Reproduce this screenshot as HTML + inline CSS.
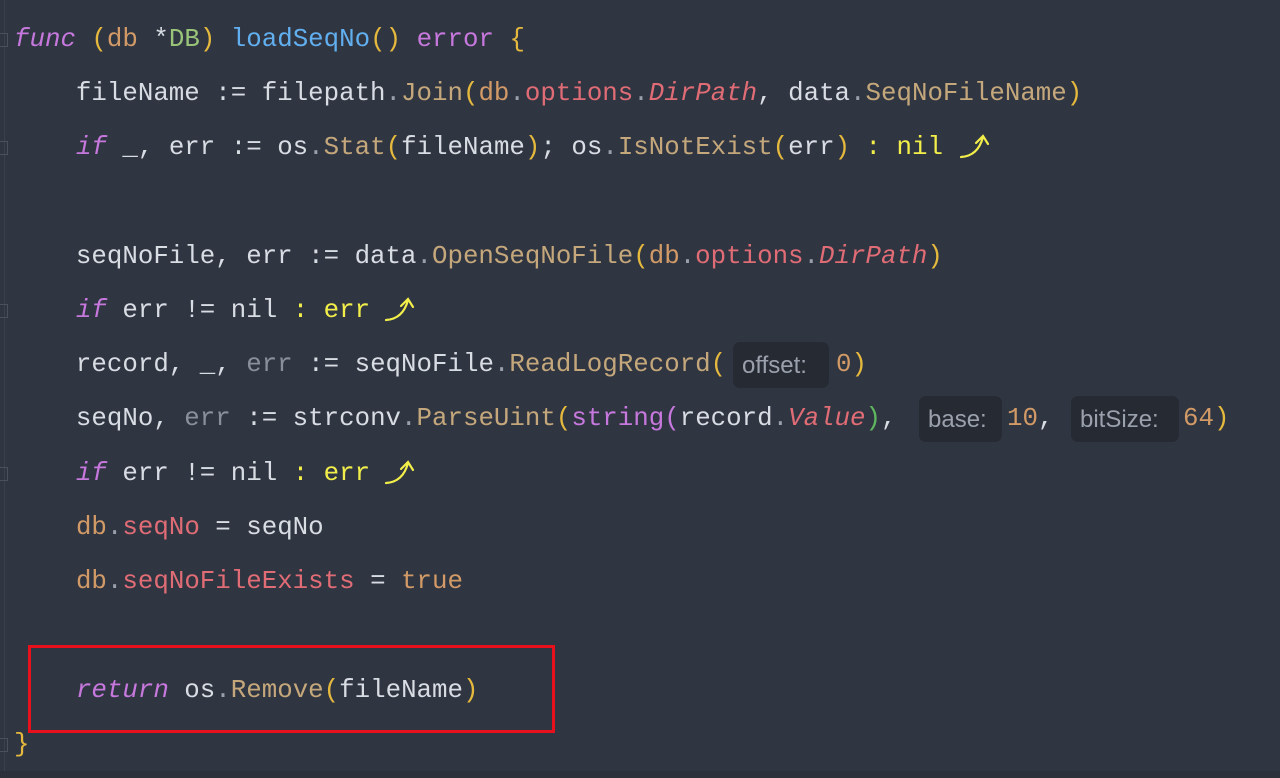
<!DOCTYPE html>
<html><head><meta charset="utf-8"><style>
html,body{margin:0;padding:0;}
body{width:1280px;height:778px;background:#303542;position:relative;overflow:hidden;font-family:"Liberation Mono","DejaVu Sans Mono",monospace;font-size:25.8px;color:#d8dce3;}
.l{position:absolute;left:14px;white-space:pre;line-height:54px;height:54px;}
.k{color:#c678dd;font-style:italic}
.kw{color:#c678dd}
.f{color:#61afef}
.p{color:#d19a66}
.t{color:#98c379}
.b{color:#e5b93d}
.m{color:#c4a77b}
.r{color:#e06c75}
.ri{color:#e06c75;font-style:italic}
.g{color:#8a909b}
.y{color:#f2ee4a}
.pu{color:#c678dd}
.gr{color:#5fb85f}
.d{color:#9aa0aa}
.h{position:absolute;background:#262a33;border-radius:7px;color:#9aa1ad;font-family:"Liberation Sans",sans-serif;font-size:24px;height:46px;line-height:48px;padding:0 9px;box-sizing:border-box;}
.box{position:absolute;left:28px;top:645px;width:527px;height:88px;border:3px solid #e8101c;box-sizing:border-box;}
.fold{position:absolute;left:0;width:8px;height:14px;border:1px solid #4a505c;border-left:none;box-sizing:border-box;}
.bot{position:absolute;left:0;top:771px;width:1280px;height:7px;background:#2b303b;}
</style></head><body>
<div style="position:absolute;left:4px;top:0;width:1px;height:771px;background:#3a404c"></div>
<div class="fold" style="top:33px"></div>
<div class="fold" style="top:141px"></div>
<div class="fold" style="top:304px"></div>
<div class="fold" style="top:467px"></div>
<div class="fold" style="top:738px"></div>

<div class="l" style="top:13px"><span class="k">func</span> <span class="b">(</span><span class="p">db</span> *<span class="t">DB</span><span class="b">)</span> <span class="f">loadSeqNo</span><span class="b">()</span> <span class="kw">error</span> <span class="b">{</span></div>
<div class="l" style="top:67px">    fileName := filepath<span class="d">.</span><span class="m">Join</span><span class="b">(</span><span class="p">db</span><span class="d">.</span><span class="r">options</span><span class="d">.</span><span class="ri">DirPath</span>, data<span class="d">.</span><span class="m">SeqNoFileName</span><span class="b">)</span></div>
<div class="l" style="top:121px">    <span class="k">if</span> _, err := os<span class="d">.</span><span class="m">Stat</span><span class="b">(</span>fileName<span class="b">)</span>; os<span class="d">.</span><span class="m">IsNotExist</span><span class="b">(</span>err<span class="b">)</span> <span class="y">: nil</span></div>
<div class="l" style="top:230px">    seqNoFile, err := data<span class="d">.</span><span class="m">OpenSeqNoFile</span><span class="b">(</span><span class="p">db</span><span class="d">.</span><span class="r">options</span><span class="d">.</span><span class="ri">DirPath</span><span class="b">)</span></div>
<div class="l" style="top:284px">    <span class="k">if</span> err != nil <span class="y">: err</span></div>
<div class="l" style="top:338px">    record, _, <span class="g">err</span> := seqNoFile<span class="d">.</span><span class="m">ReadLogRecord</span><span class="b">(</span></div>
<div class="h" style="left:733px;top:342px;width:96px">offset:</div>
<div class="l" style="top:338px;left:836px"><span class="p">0</span><span class="b">)</span></div>
<div class="l" style="top:392px">    seqNo, <span class="g">err</span> := strconv<span class="d">.</span><span class="m">ParseUint</span><span class="b">(</span><span class="pu">string</span><span class="pu">(</span>record<span class="d">.</span><span class="ri">Value</span><span class="gr">)</span>, </div>
<div class="h" style="left:919px;top:396px;width:83px">base:</div>
<div class="l" style="top:392px;left:1007px"><span class="p">10</span>, </div>
<div class="h" style="left:1071px;top:396px;width:108px">bitSize:</div>
<div class="l" style="top:392px;left:1183px"><span class="p">64</span><span class="b">)</span></div>
<div class="l" style="top:447px">    <span class="k">if</span> err != nil <span class="y">: err</span></div>
<div class="l" style="top:501px">    <span class="p">db</span><span class="d">.</span><span class="r">seqNo</span> = seqNo</div>
<div class="l" style="top:555px">    <span class="p">db</span><span class="d">.</span><span class="r">seqNoFileExists</span> = <span class="p">true</span></div>
<div class="l" style="top:664px">    <span class="k">return</span> os<span class="d">.</span><span class="m">Remove</span><span class="b">(</span>fileName<span class="b">)</span></div>
<div class="l" style="top:718px"><span class="b">}</span></div>

<svg style="position:absolute;left:958px;top:132px" width="34" height="30" viewBox="0 0 34 30"><path d="M3 25 Q20 24 25 5 M18 11 L25 4 L30 12" fill="none" stroke="#f2ee4a" stroke-width="2.2" stroke-linecap="round"/></svg>
<svg style="position:absolute;left:383px;top:295px" width="34" height="30" viewBox="0 0 34 30"><path d="M3 25 Q20 24 25 5 M18 11 L25 4 L30 12" fill="none" stroke="#f2ee4a" stroke-width="2.2" stroke-linecap="round"/></svg>
<svg style="position:absolute;left:383px;top:458px" width="34" height="30" viewBox="0 0 34 30"><path d="M3 25 Q20 24 25 5 M18 11 L25 4 L30 12" fill="none" stroke="#f2ee4a" stroke-width="2.2" stroke-linecap="round"/></svg>

<div class="box"></div>
<div class="bot"></div>
</body></html>
